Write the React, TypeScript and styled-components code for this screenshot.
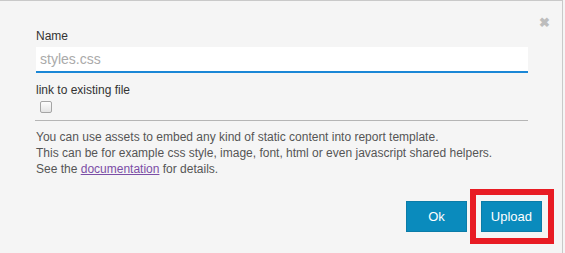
import styled, { createGlobalStyle } from "styled-components";

const GlobalStyle = createGlobalStyle`
  html, body {
    margin: 0;
    padding: 0;
    background: #f5f5f5;
  }
  body {
    font-family: "Liberation Sans", Arial, sans-serif;
    font-size: 12px;
    color: #333;
  }
`;

const Frame = styled.div`
  position: relative;
  box-sizing: border-box;
  width: 563px;
  height: 253px;
  border-top: 1px solid #c9c9c9;
  border-right: 1px solid #c9c9c9;
  background: #f5f5f5;
  display: flex;
  flex-direction: column;
`;

const CloseButton = styled.span`
  position: absolute;
  top: 15px;
  right: 12px;
  color: #bdbdbd;
  font-size: 13px;
  font-weight: bold;
  line-height: 13px;
  cursor: pointer;
`;

const Body = styled.div`
  padding: 28px 0 0 36px;
  width: 492px;
  display: flex;
  flex-direction: column;
`;

const Label = styled.label`
  display: block;
  line-height: 14px;
  color: #333;
`;

const TextInput = styled.input`
  box-sizing: border-box;
  margin-top: 4px;
  width: 100%;
  height: 26px;
  padding: 0 4px;
  border: none;
  border-bottom: 2px solid #1b87d6;
  background: #fff;
  font-family: inherit;
  font-size: 14px;
  color: #333;
  caret-color: #333;
  outline: none;

  &::placeholder {
    color: #aaa;
  }
`;

const FieldGroup = styled.div`
  margin-top: ${({ $top }: { $top: number }) => $top}px;
  display: flex;
  flex-direction: column;
`;

const CheckBox = styled.input`
  appearance: none;
  box-sizing: border-box;
  width: 12px;
  height: 12px;
  margin: 4px 0 0 4px;
  border: 1px solid #a5a5a5;
  border-radius: 2px;
  background: linear-gradient(#fdfdfd, #e4e4e4);
`;

const Separator = styled.hr`
  margin: 7px 0 0 -1px;
  border: none;
  border-top: 1px solid #b5b5b5;
  height: 0;
`;

const Help = styled.p`
  margin: 8px 0 0 0;
  line-height: 16px;
  color: #555;
`;

const DocLink = styled.a`
  color: #7b4ea6;
  text-decoration: underline;
`;

const Footer = styled.div`
  margin-top: auto;
  padding: 0 8px 9px 0;
  display: flex;
  justify-content: flex-end;
  align-items: center;
`;

const Button = styled.button`
  box-sizing: border-box;
  height: 31px;
  padding: 0 ${({ $pad }: { $pad: number }) => $pad}px;
  border: 1px solid #0b7ca8;
  background: #0a8bbd;
  color: #fff;
  font-family: inherit;
  font-size: 13px;
  cursor: pointer;
`;

const Highlight = styled.div`
  margin-left: 3px;
  padding: 6px 6px 6px 5px;
  border: 6px solid #e81c24;
  display: flex;
`;

export default function App() {
  return (
    <>
      <GlobalStyle />
      <Frame>
        <CloseButton>✖</CloseButton>
        <Body>
          <Label>Name</Label>
          <TextInput placeholder="styles.css" autoFocus />
          <FieldGroup $top={10}>
            <Label>link to existing file</Label>
            <CheckBox type="checkbox" />
          </FieldGroup>
          <Separator />
          <Help>
            You can use assets to embed any kind of static content into report template.
            <br />
            This can be for example css style, image, font, html or even javascript shared helpers.
            <br />
            See the <DocLink href="#">documentation</DocLink> for details.
          </Help>
        </Body>
        <Footer>
          <Button $pad={21}>Ok</Button>
          <Highlight>
            <Button $pad={9}>Upload</Button>
          </Highlight>
        </Footer>
      </Frame>
    </>
  );
}
